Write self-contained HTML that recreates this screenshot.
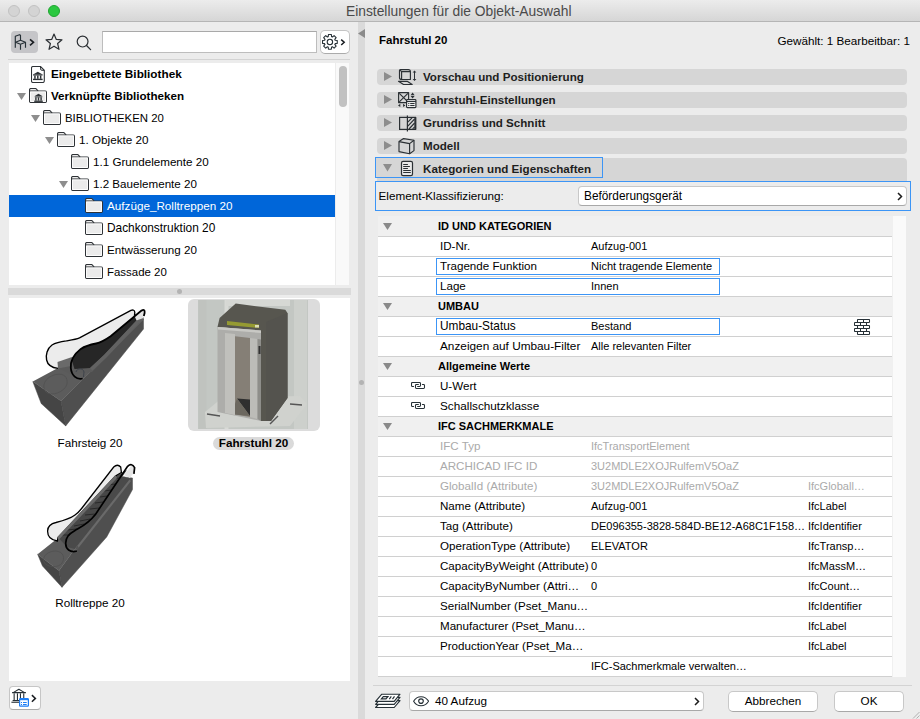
<!DOCTYPE html>
<html><head><meta charset="utf-8">
<style>
*{box-sizing:border-box;margin:0;padding:0}
html,body{width:920px;height:719px;overflow:hidden;background:#ececec;font-family:"Liberation Sans",sans-serif;color:#000}
.a{position:absolute}
.t{position:absolute;white-space:nowrap;font-size:11.7px;line-height:22px}
.s{position:absolute;white-space:nowrap;font-size:11px;line-height:20px}
#title{left:0;top:0;width:920px;height:22px;background:linear-gradient(#ececec,#d6d6d6);border-bottom:1px solid #b5b5b5}
.tl{position:absolute;top:5px;width:12px;height:12px;border-radius:50%;background:#d4d4d4;border:1px solid #c2c2c2}
</style></head><body>
<!-- title bar -->
<div id="title" class="a">
  <div class="tl" style="left:8px"></div>
  <div class="tl" style="left:28px"></div>
  <div class="tl" style="left:48px;background:#2bc840;border-color:#1fa530"></div>
  <div class="t" style="left:346px;top:1px;font-size:13.8px;line-height:22px;color:#4a4a4a">Einstellungen für die Objekt-Auswahl</div>
</div>

<!-- LEFT PANEL -->
<!-- toolbar -->
<div class="a" style="left:10.5px;top:31px;width:27px;height:22px;background:#c5c5c8;border-radius:4px"></div>
<svg class="a" style="left:14px;top:33px" width="22" height="18" viewBox="0 0 22 18">
 <g fill="none" stroke="#263036" stroke-width="1.15" stroke-linecap="butt" stroke-linejoin="round">
  <path d="M1.3,14.7 V3.3 L5.5,1.7 L6.5,2.3 V7.3"/>
  <path d="M1.5,9.3 L6.5,7.3 L11.5,9.3 L6.5,11.3Z"/>
  <path d="M6.5,11.3 V16.7 M11.5,9.3 V14.7"/>
 </g>
 <path d="M16,6.3 L19.5,9.3 L16,12.4" fill="none" stroke="#1a1e22" stroke-width="1.6" stroke-linejoin="miter"/>
</svg>
<svg class="a" style="left:45px;top:33px" width="18" height="18" viewBox="0 0 18 18">
 <path d="M9,1 L11.3,6.4 L17,6.8 L12.6,10.5 L14,16.3 L9,13.2 L4,16.3 L5.4,10.5 L1,6.8 L6.7,6.4Z" fill="none" stroke="#2b2f33" stroke-width="1.2" stroke-linejoin="round"/>
</svg>
<svg class="a" style="left:76px;top:35px" width="16" height="16" viewBox="0 0 16 16">
 <circle cx="6.6" cy="6.6" r="5.4" fill="none" stroke="#2b2f33" stroke-width="1.2"/>
 <path d="M10.5,10.5 L14.6,14.6" stroke="#2b2f33" stroke-width="1.3" stroke-linecap="round"/>
</svg>
<div class="a" style="left:102px;top:31px;width:215px;height:22px;background:#fff;border:1px solid #bdbdbd;border-top-color:#a9a9a9"></div>
<div class="a" style="left:320px;top:30px;width:30px;height:24px;background:#fff;border:1px solid #c4c4c4;border-bottom-color:#ababab;border-radius:5px"></div>
<svg class="a" style="left:322px;top:34px" width="26" height="17" viewBox="0 0 26 17">
 <g transform="translate(7.9,7.9)" fill="none" stroke="#263036" stroke-width="1.1" stroke-linejoin="round">
  <path d="M-2.10,-5.08L-1.70,-5.23L-1.43,-7.36L1.43,-7.36L1.70,-5.23L2.10,-5.08L2.50,-4.90L4.19,-6.22L6.22,-4.19L4.90,-2.50L5.08,-2.10L5.23,-1.70L7.36,-1.43L7.36,1.43L5.23,1.70L5.08,2.10L4.90,2.50L6.22,4.19L4.19,6.22L2.50,4.90L2.10,5.08L1.70,5.23L1.43,7.36L-1.43,7.36L-1.70,5.23L-2.10,5.08L-2.50,4.90L-4.19,6.22L-6.22,4.19L-4.90,2.50L-5.08,2.10L-5.23,1.70L-7.36,1.43L-7.36,-1.43L-5.23,-1.70L-5.08,-2.10L-4.90,-2.50L-6.22,-4.19L-4.19,-6.22L-2.50,-4.90Z"/>
  <circle cx="0" cy="0" r="2.7"/>
 </g>
 <path d="M19.2,5.6 L22.2,8.3 L19.2,11" fill="none" stroke="#1a1e22" stroke-width="1.5" stroke-linejoin="miter"/>
</svg>
<div class="a" style="left:8px;top:59px;width:342px;height:1px;background:#d3d3d3"></div>

<!-- tree list -->
<div class="a" style="left:9px;top:63px;width:326px;height:222px;background:#fff;overflow:hidden">
</div>
<div class="a" style="left:335px;top:63px;width:14px;height:222px;background:#f9f9f9;border-left:1px solid #ececec"></div>
<div class="a" style="left:339px;top:66px;width:8px;height:41px;background:#c1c1c1;border-radius:4px"></div>
<svg class="a" style="left:31px;top:66px" width="14" height="17" viewBox="0 0 14 17"><path d="M2,0.5 H9.5 L13.3,4.3 V15 Q13.3,16.5 11.8,16.5 H2 Q0.5,16.5 0.5,15 V2 Q0.5,0.5 2,0.5Z" fill="#fff" stroke="#2e3236" stroke-width="1.1"/><path d="M9.5,0.8 V2.8 Q9.5,4.3 11,4.3 H13" fill="none" stroke="#2e3236" stroke-width="1"/><g fill="#2e3236"><path d="M6.8,5.7 L11.6,8.5 H2Z"/><rect x="2" y="8.4" width="9.6" height="1.1"/><rect x="3.2" y="9.5" width="1.5" height="3.3"/><rect x="6.05" y="9.5" width="1.5" height="3.3"/><rect x="8.9" y="9.5" width="1.5" height="3.3"/><rect x="2" y="12.7" width="9.6" height="1.4"/></g></svg>
<div class="t" style="left:51px;top:63px;font-weight:bold;color:#000;font-size:11.78px">Eingebettete Bibliothek</div>
<svg class="a" style="left:17px;top:93px" width="9" height="7"><path d="M0,0 H9 L4.5,7Z" fill="#8e8e8e"/></svg>
<svg class="a" style="left:29px;top:88px" width="18" height="15" viewBox="0 0 18 15"><path d="M2,14.5 H16 Q17.5,14.5 17.5,13 V4.5 Q17.5,3 16,3 H9.2 L7.2,0.8 Q6.9,0.5 6.5,0.5 H2 Q0.5,0.5 0.5,2 V13 Q0.5,14.5 2,14.5Z" fill="#ebebeb" stroke="#2e3236" stroke-width="1.1"/><path d="M0.6,3 H9.2" stroke="#2e3236" stroke-width="1.1"/><rect x="1.6" y="3.9" width="14.8" height="9.6" fill="none" stroke="#fff" stroke-width="0.9"/><g fill="#2e3236"><path d="M9.5,5.8 L13.6,8.2 H5.4Z"/><rect x="5.8" y="8.5" width="7.4" height="0.9"/><rect x="6.2" y="9.4" width="1.4" height="3.2"/><rect x="8.8" y="9.4" width="1.4" height="3.2"/><rect x="11.4" y="9.4" width="1.4" height="3.2"/><rect x="5.2" y="12.6" width="8.6" height="1.3"/></g></svg>
<div class="t" style="left:51px;top:85px;font-weight:bold;color:#000;font-size:11.64px">Verknüpfte Bibliotheken</div>
<svg class="a" style="left:31px;top:115px" width="9" height="7"><path d="M0,0 H9 L4.5,7Z" fill="#8e8e8e"/></svg>
<svg class="a" style="left:43px;top:110px" width="18" height="15" viewBox="0 0 18 15"><path d="M2,14.5 H16 Q17.5,14.5 17.5,13 V4.5 Q17.5,3 16,3 H9.2 L7.2,0.8 Q6.9,0.5 6.5,0.5 H2 Q0.5,0.5 0.5,2 V13 Q0.5,14.5 2,14.5Z" fill="#ebebeb" stroke="#2e3236" stroke-width="1.1"/><path d="M0.6,3 H9.2" stroke="#2e3236" stroke-width="1.1"/><rect x="1.6" y="3.9" width="14.8" height="9.6" fill="none" stroke="#fff" stroke-width="0.9"/></svg>
<div class="t" style="left:65px;top:107px;color:#000;font-size:11.41px">BIBLIOTHEKEN 20</div>
<svg class="a" style="left:45px;top:137px" width="9" height="7"><path d="M0,0 H9 L4.5,7Z" fill="#8e8e8e"/></svg>
<svg class="a" style="left:57px;top:132px" width="18" height="15" viewBox="0 0 18 15"><path d="M2,14.5 H16 Q17.5,14.5 17.5,13 V4.5 Q17.5,3 16,3 H9.2 L7.2,0.8 Q6.9,0.5 6.5,0.5 H2 Q0.5,0.5 0.5,2 V13 Q0.5,14.5 2,14.5Z" fill="#ebebeb" stroke="#2e3236" stroke-width="1.1"/><path d="M0.6,3 H9.2" stroke="#2e3236" stroke-width="1.1"/><rect x="1.6" y="3.9" width="14.8" height="9.6" fill="none" stroke="#fff" stroke-width="0.9"/></svg>
<div class="t" style="left:79px;top:129px;color:#000;font-size:11.7px">1. Objekte 20</div>
<svg class="a" style="left:71px;top:154px" width="18" height="15" viewBox="0 0 18 15"><path d="M2,14.5 H16 Q17.5,14.5 17.5,13 V4.5 Q17.5,3 16,3 H9.2 L7.2,0.8 Q6.9,0.5 6.5,0.5 H2 Q0.5,0.5 0.5,2 V13 Q0.5,14.5 2,14.5Z" fill="#ebebeb" stroke="#2e3236" stroke-width="1.1"/><path d="M0.6,3 H9.2" stroke="#2e3236" stroke-width="1.1"/><rect x="1.6" y="3.9" width="14.8" height="9.6" fill="none" stroke="#fff" stroke-width="0.9"/></svg>
<div class="t" style="left:93px;top:151px;color:#000;font-size:11.63px">1.1 Grundelemente 20</div>
<svg class="a" style="left:59px;top:181px" width="9" height="7"><path d="M0,0 H9 L4.5,7Z" fill="#8e8e8e"/></svg>
<svg class="a" style="left:71px;top:176px" width="18" height="15" viewBox="0 0 18 15"><path d="M2,14.5 H16 Q17.5,14.5 17.5,13 V4.5 Q17.5,3 16,3 H9.2 L7.2,0.8 Q6.9,0.5 6.5,0.5 H2 Q0.5,0.5 0.5,2 V13 Q0.5,14.5 2,14.5Z" fill="#ebebeb" stroke="#2e3236" stroke-width="1.1"/><path d="M0.6,3 H9.2" stroke="#2e3236" stroke-width="1.1"/><rect x="1.6" y="3.9" width="14.8" height="9.6" fill="none" stroke="#fff" stroke-width="0.9"/></svg>
<div class="t" style="left:93px;top:173px;color:#000;font-size:11.61px">1.2 Bauelemente 20</div>
<div class="a" style="left:9px;top:195px;width:326px;height:22px;background:#0066d9"></div>
<svg class="a" style="left:85px;top:198px" width="18" height="15" viewBox="0 0 18 15"><path d="M2,14.5 H16 Q17.5,14.5 17.5,13 V4.5 Q17.5,3 16,3 H9.2 L7.2,0.8 Q6.9,0.5 6.5,0.5 H2 Q0.5,0.5 0.5,2 V13 Q0.5,14.5 2,14.5Z" fill="#ebebeb" stroke="#2e3236" stroke-width="1.1"/><path d="M0.6,3 H9.2" stroke="#2e3236" stroke-width="1.1"/><rect x="1.6" y="3.9" width="14.8" height="9.6" fill="none" stroke="#fff" stroke-width="0.9"/></svg>
<div class="t" style="left:107px;top:195px;color:#fff;font-size:11.69px">Aufzüge_Rolltreppen 20</div>
<svg class="a" style="left:85px;top:220px" width="18" height="15" viewBox="0 0 18 15"><path d="M2,14.5 H16 Q17.5,14.5 17.5,13 V4.5 Q17.5,3 16,3 H9.2 L7.2,0.8 Q6.9,0.5 6.5,0.5 H2 Q0.5,0.5 0.5,2 V13 Q0.5,14.5 2,14.5Z" fill="#ebebeb" stroke="#2e3236" stroke-width="1.1"/><path d="M0.6,3 H9.2" stroke="#2e3236" stroke-width="1.1"/><rect x="1.6" y="3.9" width="14.8" height="9.6" fill="none" stroke="#fff" stroke-width="0.9"/></svg>
<div class="t" style="left:107px;top:217px;color:#000;font-size:11.89px">Dachkonstruktion 20</div>
<svg class="a" style="left:85px;top:242px" width="18" height="15" viewBox="0 0 18 15"><path d="M2,14.5 H16 Q17.5,14.5 17.5,13 V4.5 Q17.5,3 16,3 H9.2 L7.2,0.8 Q6.9,0.5 6.5,0.5 H2 Q0.5,0.5 0.5,2 V13 Q0.5,14.5 2,14.5Z" fill="#ebebeb" stroke="#2e3236" stroke-width="1.1"/><path d="M0.6,3 H9.2" stroke="#2e3236" stroke-width="1.1"/><rect x="1.6" y="3.9" width="14.8" height="9.6" fill="none" stroke="#fff" stroke-width="0.9"/></svg>
<div class="t" style="left:107px;top:239px;color:#000;font-size:11.65px">Entwässerung 20</div>
<svg class="a" style="left:85px;top:264px" width="18" height="15" viewBox="0 0 18 15"><path d="M2,14.5 H16 Q17.5,14.5 17.5,13 V4.5 Q17.5,3 16,3 H9.2 L7.2,0.8 Q6.9,0.5 6.5,0.5 H2 Q0.5,0.5 0.5,2 V13 Q0.5,14.5 2,14.5Z" fill="#ebebeb" stroke="#2e3236" stroke-width="1.1"/><path d="M0.6,3 H9.2" stroke="#2e3236" stroke-width="1.1"/><rect x="1.6" y="3.9" width="14.8" height="9.6" fill="none" stroke="#fff" stroke-width="0.9"/></svg>
<div class="t" style="left:107px;top:261px;color:#000;font-size:11.45px">Fassade 20</div>
<!-- horizontal splitter -->
<div class="a" style="left:8px;top:288px;width:343px;height:7px;background:#dadada"></div>
<div class="a" style="left:176.5px;top:288.5px;width:5px;height:5px;border-radius:50%;background:#b3b3b3"></div>
<!-- icon view -->
<div class="a" style="left:9px;top:298px;width:341px;height:383px;background:#fff"></div>
<!-- bottom library button -->
<div class="a" style="left:9px;top:686px;width:32px;height:24px;background:#fff;border:1px solid #c6c6c6;border-bottom-color:#ababab;border-radius:4px"></div>


<!-- vertical splitter -->
<div class="a" style="left:358px;top:22px;width:7px;height:697px;background:#dadada"></div>

<!-- RIGHT PANEL -->
<svg class="a" style="left:358px;top:29px" width="7" height="9"><path d="M7,0 V9 L0,4.5Z" fill="#8b8b8b"/></svg>
<div class="a" style="left:359px;top:379.5px;width:5px;height:5px;border-radius:50%;background:#b3b3b3"></div>
<div class="t" style="left:379px;top:29px;font-weight:bold;font-size:11.5px">Fahrstuhl 20</div>
<div class="t" style="right:10px;top:30px">Gewählt: 1 Bearbeitbar: 1</div>
<div class="a" style="left:377px;top:69px;width:530px;height:16px;background:#d6d6d6;border-radius:4px"></div>
<svg class="a" style="left:384px;top:72px" width="8" height="9"><path d="M0,0 L8,4.5 L0,9Z" fill="#8d8d8d"/></svg>
<div class="t" style="left:423px;top:66px;font-weight:bold;font-size:11.6px;color:#1e1e1e">Vorschau und Positionierung</div>
<div class="a" style="left:377px;top:92px;width:530px;height:16px;background:#d6d6d6;border-radius:4px"></div>
<svg class="a" style="left:384px;top:95px" width="8" height="9"><path d="M0,0 L8,4.5 L0,9Z" fill="#8d8d8d"/></svg>
<div class="t" style="left:423px;top:89px;font-weight:bold;font-size:11.6px;color:#1e1e1e">Fahrstuhl-Einstellungen</div>
<div class="a" style="left:377px;top:115px;width:530px;height:16px;background:#d6d6d6;border-radius:4px"></div>
<svg class="a" style="left:384px;top:118px" width="8" height="9"><path d="M0,0 L8,4.5 L0,9Z" fill="#8d8d8d"/></svg>
<div class="t" style="left:423px;top:112px;font-weight:bold;font-size:11.6px;color:#1e1e1e">Grundriss und Schnitt</div>
<div class="a" style="left:377px;top:138px;width:530px;height:16px;background:#d6d6d6;border-radius:4px"></div>
<svg class="a" style="left:384px;top:141px" width="8" height="9"><path d="M0,0 L8,4.5 L0,9Z" fill="#8d8d8d"/></svg>
<div class="t" style="left:423px;top:135px;font-weight:bold;font-size:11.6px;color:#1e1e1e">Modell</div>
<div class="a" style="left:377px;top:158px;width:530px;height:23px;background:#d6d6d6;border-radius:4px 4px 0 0"></div>
<div class="a" style="left:375px;top:157px;width:228px;height:21px;border:1px solid #3c95f6;background:#d6d6d6"></div>
<svg class="a" style="left:383px;top:164px" width="9" height="8"><path d="M0,0 H9 L4.5,7.5Z" fill="#8d8d8d"/></svg>
<div class="t" style="left:423px;top:157.5px;font-weight:bold;font-size:11.65px;color:#1e1e1e">Kategorien und Eigenschaften</div>
<div class="a" style="left:375px;top:181px;width:536px;height:30px;border:1px solid #3c95f6"></div>
<div class="t" style="left:378.5px;top:185px">Element-Klassifizierung:</div>
<div class="a" style="left:578px;top:186px;width:329px;height:20px;background:#fff;border:1px solid #c8c8c8;border-bottom-color:#a8a8a8;border-radius:4px"></div>
<div class="t" style="left:584px;top:185px;font-size:11.85px">Beförderungsgerät</div>
<svg class="a" style="left:897px;top:192px" width="6" height="9"><path d="M1,1 L4.5,4.5 L1,8" fill="none" stroke="#1c1c1c" stroke-width="1.5"/></svg>
<div class="a" style="left:378px;top:216px;width:514px;height:461px;background:#fff"></div>
<div class="a" style="left:892px;top:216px;width:14px;height:461px;background:#fafafa;border-left:1px solid #f0f0f0"></div>
<div class="a" style="left:378px;top:216px;width:514px;height:20px;background:#f0f0f0"></div>
<svg class="a" style="left:383px;top:223px" width="9" height="7"><path d="M0,0 H9 L4.5,7Z" fill="#8a8a8a"/></svg>
<div class="s" style="left:438px;top:216px;font-weight:bold">ID UND KATEGORIEN</div>
<div class="s" style="left:440px;top:236px;font-size:11.6px;">ID-Nr.</div>
<div class="s" style="left:591px;top:236px;">Aufzug-001</div>
<div class="a" style="left:436px;top:258px;width:284px;height:17px;border:1px solid #3c95f6"></div>
<div class="s" style="left:440px;top:256px;font-size:11.6px;">Tragende Funktion</div>
<div class="s" style="left:591px;top:256px;">Nicht tragende Elemente</div>
<div class="a" style="left:436px;top:278px;width:284px;height:17px;border:1px solid #3c95f6"></div>
<div class="s" style="left:440px;top:276px;font-size:11.6px;">Lage</div>
<div class="s" style="left:591px;top:276px;">Innen</div>
<div class="a" style="left:378px;top:296px;width:514px;height:20px;background:#f0f0f0"></div>
<svg class="a" style="left:383px;top:303px" width="9" height="7"><path d="M0,0 H9 L4.5,7Z" fill="#8a8a8a"/></svg>
<div class="s" style="left:438px;top:296px;font-weight:bold">UMBAU</div>
<div class="a" style="left:436px;top:318px;width:284px;height:17px;border:1px solid #3c95f6"></div>
<div class="s" style="left:440px;top:316px;font-size:11.85px;">Umbau-Status</div>
<div class="s" style="left:591px;top:316px;">Bestand</div>
<svg class="a" style="left:854px;top:319px" width="17" height="17" viewBox="0 0 17 17"><g fill="#fff" stroke="#263036" stroke-width="1.05"><rect x="3.5" y="0.5" width="12.0" height="3" rx="0.5"/><path d="M9.5,0.5 V3.5"/><rect x="0.5" y="3.5" width="12.0" height="3" rx="0.5"/><path d="M6.5,3.5 V6.5"/><rect x="3.5" y="6.5" width="12.0" height="3" rx="0.5"/><path d="M9.5,6.5 V9.5"/><rect x="0.5" y="9.5" width="12.0" height="3" rx="0.5"/><path d="M6.5,9.5 V12.5"/><rect x="3.5" y="12.5" width="12.0" height="3" rx="0.5"/><path d="M9.5,12.5 V15.5"/></g></svg>
<div class="s" style="left:440px;top:336px;font-size:11.8px;">Anzeigen auf Umbau-Filter</div>
<div class="s" style="left:591px;top:336px;">Alle relevanten Filter</div>
<div class="a" style="left:378px;top:356px;width:514px;height:20px;background:#f0f0f0"></div>
<svg class="a" style="left:383px;top:363px" width="9" height="7"><path d="M0,0 H9 L4.5,7Z" fill="#8a8a8a"/></svg>
<div class="s" style="left:438px;top:356px;font-weight:bold">Allgemeine Werte</div>
<svg class="a" style="left:411px;top:382px" width="15" height="8" viewBox="0 0 15 8"><g fill="none" stroke="#263036" stroke-width="1.05" stroke-linecap="round"><path d="M2.6,4.5 H1.4 Q0.5,4.5 0.5,3.6 V1.4 Q0.5,0.5 1.4,0.5 H8.6 Q9.5,0.5 9.5,1.4 V3.6 Q9.5,4.5 8.6,4.5 H6.6"/><path d="M11.4,2.5 H12.6 Q13.5,2.5 13.5,3.4 V5.6 Q13.5,6.5 12.6,6.5 H5.4 Q4.5,6.5 4.5,5.6 V3.4 Q4.5,2.5 5.4,2.5 H7.4"/></g></svg>
<div class="s" style="left:440px;top:376px;font-size:11.6px;">U-Wert</div>
<svg class="a" style="left:411px;top:402px" width="15" height="8" viewBox="0 0 15 8"><g fill="none" stroke="#263036" stroke-width="1.05" stroke-linecap="round"><path d="M2.6,4.5 H1.4 Q0.5,4.5 0.5,3.6 V1.4 Q0.5,0.5 1.4,0.5 H8.6 Q9.5,0.5 9.5,1.4 V3.6 Q9.5,4.5 8.6,4.5 H6.6"/><path d="M11.4,2.5 H12.6 Q13.5,2.5 13.5,3.4 V5.6 Q13.5,6.5 12.6,6.5 H5.4 Q4.5,6.5 4.5,5.6 V3.4 Q4.5,2.5 5.4,2.5 H7.4"/></g></svg>
<div class="s" style="left:440px;top:396px;font-size:11.75px;">Schallschutzklasse</div>
<div class="a" style="left:378px;top:416px;width:514px;height:20px;background:#f0f0f0"></div>
<svg class="a" style="left:383px;top:423px" width="9" height="7"><path d="M0,0 H9 L4.5,7Z" fill="#8a8a8a"/></svg>
<div class="s" style="left:438px;top:416px;font-weight:bold">IFC SACHMERKMALE</div>
<div class="s" style="left:440px;top:436px;font-size:11.6px;color:#aaaaaa;">IFC Typ</div>
<div class="s" style="left:591px;top:436px;color:#aaaaaa;">IfcTransportElement</div>
<div class="s" style="left:440px;top:456px;font-size:11.6px;color:#aaaaaa;">ARCHICAD IFC ID</div>
<div class="s" style="left:591px;top:456px;color:#aaaaaa;">3U2MDLE2XOJRulfemV5OaZ</div>
<div class="s" style="left:440px;top:476px;font-size:11.6px;color:#aaaaaa;">GlobalId (Attribute)</div>
<div class="s" style="left:591px;top:476px;color:#aaaaaa;">3U2MDLE2XOJRulfemV5OaZ</div>
<div class="s" style="left:808px;top:476px;color:#aaaaaa;">IfcGloball…</div>
<div class="s" style="left:440px;top:496px;font-size:11.6px;">Name (Attribute)</div>
<div class="s" style="left:591px;top:496px;">Aufzug-001</div>
<div class="s" style="left:808px;top:496px;">IfcLabel</div>
<div class="s" style="left:440px;top:516px;font-size:11.6px;">Tag (Attribute)</div>
<div class="s" style="left:591px;top:516px;">DE096355-3828-584D-BE12-A68C1F158…</div>
<div class="s" style="left:808px;top:516px;">IfcIdentifier</div>
<div class="s" style="left:440px;top:536px;font-size:11.6px;">OperationType (Attribute)</div>
<div class="s" style="left:591px;top:536px;">ELEVATOR</div>
<div class="s" style="left:808px;top:536px;">IfcTransp…</div>
<div class="s" style="left:440px;top:556px;font-size:11.6px;">CapacityByWeight (Attribute)</div>
<div class="s" style="left:591px;top:556px;">0</div>
<div class="s" style="left:808px;top:556px;">IfcMassM…</div>
<div class="s" style="left:440px;top:576px;font-size:11.6px;">CapacityByNumber (Attri…</div>
<div class="s" style="left:591px;top:576px;">0</div>
<div class="s" style="left:808px;top:576px;">IfcCount…</div>
<div class="s" style="left:440px;top:596px;font-size:11.6px;">SerialNumber (Pset_Manu…</div>
<div class="s" style="left:808px;top:596px;">IfcIdentifier</div>
<div class="s" style="left:440px;top:616px;font-size:11.6px;">Manufacturer (Pset_Manu…</div>
<div class="s" style="left:808px;top:616px;">IfcLabel</div>
<div class="s" style="left:440px;top:636px;font-size:11.6px;">ProductionYear (Pset_Ma…</div>
<div class="s" style="left:808px;top:636px;">IfcLabel</div>
<div class="s" style="left:591px;top:656px;">IFC-Sachmerkmale verwalten…</div>
<div class="a" style="left:378px;top:236px;width:514px;height:1px;background:#d0d0d0"></div>
<div class="a" style="left:378px;top:256px;width:514px;height:1px;background:#d0d0d0"></div>
<div class="a" style="left:378px;top:276px;width:514px;height:1px;background:#d0d0d0"></div>
<div class="a" style="left:378px;top:296px;width:514px;height:1px;background:#d0d0d0"></div>
<div class="a" style="left:378px;top:316px;width:514px;height:1px;background:#d0d0d0"></div>
<div class="a" style="left:378px;top:336px;width:514px;height:1px;background:#d0d0d0"></div>
<div class="a" style="left:378px;top:356px;width:514px;height:1px;background:#d0d0d0"></div>
<div class="a" style="left:378px;top:376px;width:514px;height:1px;background:#d0d0d0"></div>
<div class="a" style="left:378px;top:396px;width:514px;height:1px;background:#d0d0d0"></div>
<div class="a" style="left:378px;top:416px;width:514px;height:1px;background:#d0d0d0"></div>
<div class="a" style="left:378px;top:436px;width:514px;height:1px;background:#d0d0d0"></div>
<div class="a" style="left:378px;top:456px;width:514px;height:1px;background:#d0d0d0"></div>
<div class="a" style="left:378px;top:476px;width:514px;height:1px;background:#d0d0d0"></div>
<div class="a" style="left:378px;top:496px;width:514px;height:1px;background:#d0d0d0"></div>
<div class="a" style="left:378px;top:516px;width:514px;height:1px;background:#d0d0d0"></div>
<div class="a" style="left:378px;top:536px;width:514px;height:1px;background:#d0d0d0"></div>
<div class="a" style="left:378px;top:556px;width:514px;height:1px;background:#d0d0d0"></div>
<div class="a" style="left:378px;top:576px;width:514px;height:1px;background:#d0d0d0"></div>
<div class="a" style="left:378px;top:596px;width:514px;height:1px;background:#d0d0d0"></div>
<div class="a" style="left:378px;top:616px;width:514px;height:1px;background:#d0d0d0"></div>
<div class="a" style="left:378px;top:636px;width:514px;height:1px;background:#d0d0d0"></div>
<div class="a" style="left:378px;top:656px;width:514px;height:1px;background:#d0d0d0"></div>
<div class="a" style="left:378px;top:676px;width:514px;height:1px;background:#d0d0d0"></div>
<div class="a" style="left:373px;top:685px;width:539px;height:1px;background:#d3d3d3"></div>
<div class="a" style="left:409px;top:691px;width:295px;height:20px;background:#fff;border:1px solid #c8c8c8;border-bottom-color:#a8a8a8;border-radius:4px"></div>
<div class="t" style="left:435px;top:690px">40 Aufzug</div>
<svg class="a" style="left:694px;top:697px" width="6" height="9"><path d="M1,1 L4.5,4.5 L1,8" fill="none" stroke="#1c1c1c" stroke-width="1.5"/></svg>
<svg class="a" style="left:413px;top:696px" width="16" height="11" viewBox="0 0 16 11"><path d="M0.6,5.2 C4,-0.8 12,-0.8 15.6,5.2 C12,11.2 4,11.2 0.6,5.2Z" fill="none" stroke="#263036" stroke-width="1.05"/><circle cx="8" cy="5.1" r="2.3" fill="none" stroke="#263036" stroke-width="1.2"/></svg>
<div class="a" style="left:728px;top:691px;width:90px;height:21px;background:#fff;border:1px solid #c8c8c8;border-bottom-color:#a8a8a8;border-radius:5px"></div>
<div class="t" style="left:728px;width:90px;text-align:center;top:690px">Abbrechen</div>
<div class="a" style="left:834px;top:691px;width:70px;height:21px;background:#fff;border:1px solid #c8c8c8;border-bottom-color:#a8a8a8;border-radius:5px"></div>
<div class="t" style="left:834px;width:70px;text-align:center;top:690px">OK</div>
<svg class="a" style="left:910px;top:709px" width="10" height="10"><path d="M9.5,3 L3,9.5 M9.5,6.5 L6.5,9.5" stroke="#b0b0b0" stroke-width="1"/></svg>
<svg class="a" style="left:375px;top:693px" width="27" height="16" viewBox="0 0 27 16"><g fill="#fff" stroke="#263036" stroke-width="1.15" stroke-linejoin="round"><path d="M6.8,7.6 H25 L19.2,14.5 H0.6Z"/><path d="M6.8,4.4 H25 L19.2,11.3 H0.6Z"/><path d="M6.8,1.2 H25 L19.2,8.4 H0.6Z"/></g><g fill="none" stroke="#263036" stroke-width="1.2"><path d="M8.3,3.7 H12.9 L11,5.9 H6.4Z"/><path d="M16.3,3.3 L14.3,6.2 M19.5,3.3 L17.5,6.2"/></g></svg>
<svg class="a" style="left:397px;top:69px" width="21" height="17" viewBox="0 0 21 17"><g fill="none" stroke="#2b3034" stroke-width="1.15" stroke-linejoin="round">
<path d="M3.5,0.6 H11.3 Q13.4,0.6 13.4,2.6 V10.5 H4.6 Q2.5,10.5 2.5,8.5 V1.6 Q2.5,0.6 3.5,0.6Z"/><path d="M2.8,0.9 L4.6,2.6 H13.2 M4.6,2.6 V10.3"/>
<path d="M1.5,12.3 H10.2 L15.2,15.5 H6.5Z"/></g>
<path d="M17.5,3 V10.5" stroke="#2b3034" stroke-width="1"/><path d="M15.6,3.6 L17.5,1.4 L19.4,3.6Z M15.6,9.9 L17.5,12.1 L19.4,9.9Z" fill="#2b3034"/></svg>
<svg class="a" style="left:397px;top:92px" width="21" height="17" viewBox="0 0 21 17"><g fill="none" stroke="#2b3034" stroke-width="1.15" stroke-linejoin="round">
<rect x="1.6" y="0.6" width="10" height="10"/><path d="M2.3,1.3 L10.9,9.9 M10.9,1.3 L2.3,9.9"/>
</g><rect x="9.6" y="7.6" width="9.3" height="8" rx="0.8" fill="#fff" stroke="#2b3034" stroke-width="1.2"/><rect x="9.6" y="9" width="9.3" height="1.1" fill="#2b3034"/>
<g fill="#2b3034"><rect x="11.2" y="11" width="1.2" height="1.1"/><rect x="11.2" y="13" width="1.2" height="1.1"/><rect x="13.2" y="11" width="4.4" height="1.1"/><rect x="13.2" y="13" width="4.4" height="1.1"/>
<path d="M13.6,3.2 L15.6,0.6 L17.6,3.2Z M13.6,4 L15.6,6.6 L17.6,4Z M1,13.4 L3.3,11.7 L3.3,15.1Z M6.1,11.7 L8.4,13.4 L6.1,15.1Z"/></g></svg>
<svg class="a" style="left:397px;top:115px" width="21" height="17" viewBox="0 0 21 17">
<rect x="2.6" y="2.4" width="15.8" height="12" fill="none" stroke="#2b3034" stroke-width="1.2"/>
<path d="M10.4,0.5 V16.5" stroke="#2b3034" stroke-width="1.2"/><path d="M18.4,2.2 V14.6" stroke="#2b3034" stroke-width="2"/>
<g stroke="#2b3034" stroke-width="1.1"><path d="M10.8,7.2 L15,2.8 M10.8,11.2 L17.6,4 M12,14 L17.6,8 M15.6,14 L17.6,11.8"/></g></svg>
<svg class="a" style="left:397px;top:138px" width="21" height="17" viewBox="0 0 21 17"><g fill="none" stroke="#2b3034" stroke-width="1.15" stroke-linejoin="round" stroke-width="1.2">
<path d="M2,3.6 L6.6,0.6 L17,2.2 V12.6 L12.6,15.8 L2,13.6Z"/><path d="M2,3.6 L12.6,5.6 L17,2.2 M12.6,5.6 V15.8"/></g></svg>
<svg class="a" style="left:400px;top:160px" width="14" height="17" viewBox="0 0 14 17"><rect x="1.5" y="1.4" width="11" height="14.2" rx="1.6" fill="#e9e9e9" stroke="#2b3034" stroke-width="1.2"/>
<g fill="#2b3034"><rect x="3.2" y="4" width="4.7" height="1"/><rect x="3.2" y="6" width="6.7" height="1"/><rect x="3.2" y="8" width="4.7" height="1"/><rect x="3.2" y="10" width="7.6" height="1"/><rect x="3.2" y="12" width="7.6" height="1"/></g></svg>
<svg class="a" style="left:10px;top:688px" width="28" height="20" viewBox="0 0 28 20">
<path d="M3.6,4.4 L8.9,1.3 L14.2,4.4" fill="#fff" stroke="#263036" stroke-width="1.1" stroke-linejoin="round"/>
<g fill="#263036"><rect x="2" y="4" width="14" height="1.3" rx="0.5"/>
<rect x="3.6" y="5.3" width="1.1" height="7"/><rect x="6.9" y="5.3" width="1.1" height="7"/><rect x="9.9" y="5.3" width="1.1" height="7"/><rect x="13.2" y="5.3" width="1.1" height="7"/>
<rect x="2.6" y="12" width="12" height="1.1"/><rect x="1.4" y="13.7" width="14" height="1.1"/></g>
<rect x="9.6" y="10.6" width="8.8" height="7.6" rx="0.8" fill="#fff" stroke="#1b7df6" stroke-width="1.2"/><rect x="9.6" y="11" width="8.8" height="1.2" fill="#1b7df6"/>
<g fill="#1b7df6"><rect x="11" y="14" width="1" height="1"/><rect x="11" y="16" width="1" height="1"/><rect x="13" y="14" width="3.7" height="1"/><rect x="13" y="16" width="3.7" height="1"/></g>
<path d="M21.9,7.1 L25.4,10.4 L21.9,13.7" fill="none" stroke="#1a1e22" stroke-width="1.5"/>
</svg>
<svg class="a" style="left:25px;top:300px" width="130" height="130" viewBox="25 300 130 130">
<path d="M61,400.9 L143.5,319 L143.5,329 L65.7,425.9Z" fill="#4f4f4f" stroke="#4f4f4f" stroke-width="0.5"/>
<path d="M32.8,381.6 L61,400.9 L65.7,425.9 L41.2,403.5Z" fill="#454545" stroke="#454545" stroke-width="0.5"/>
<path d="M32.8,381.6 L57.9,368 L136,316 L143.5,317 L143.5,319.5 L61,400.9Z" fill="#5c5c5c"/>
<path d="M46,392 C41,386 45,377 56,374.5 C64,373 68,377 67,384 C65,392 51,397 46,392Z" fill="none" stroke="#505050" stroke-width="0.8"/>
<path d="M57.9,368 L58,360 L134,314 L143,316 L143,320 L92,372 L70,374Z" fill="#5a5a5a"/>
<path d="M72,361 C74,355 77,351.5 80.8,348.9 C86,345.5 91,344.5 96.1,343.5 C101,342.5 106,339.5 110.6,336.3 L142.9,309.8 L143,317 L136,321 L104,355 L90,368 L74.5,369Z" fill="#262626"/>
<path d="M90,368 L104,355 L136,321 L143,317 L143.5,319.8 L138.5,323.5 L106.5,357.5 L92.5,370.5Z" fill="#626262"/>
<path d="M58,368.4 C51,367.5 47.5,364.5 46.6,360 C45.6,355 47,348.5 52,345 C56,342.5 61,341.6 66.3,340.9 C72,340 76,339.5 79.5,337.9 L130.9,310.4 Q134.5,309 134.8,312.5 L134.5,315.8 L110.6,336.3 C106,339.5 101,342.5 96.1,343.5 C91,344.5 86,345.5 80.8,348.9 C76,352 73,356 72,360 L58,364Z" fill="#ececec"/>
<path d="M134.5,315.8 L142,310 L144,311 L143.5,318 L136.5,320.5Z" fill="#e4e4e4"/>
<path d="M58,368.4 C51,367.5 47.5,364.5 46.6,360 C45.6,355 47,348.5 52,345 C56,342.5 61,341.6 66.3,340.9 C72,340 76,339.5 79.5,337.9 L130.9,310.4 Q134.5,309 134.8,312.5 L134.5,315.8" fill="none" stroke="#000" stroke-width="1.35"/>
<path d="M57.5,362 L72,357 L71,366 L58,368.5Z" fill="#6a6a6a"/>
<path d="M82.6,378.5 C76.5,380 71.5,375.5 70.8,368 C70.2,361 73,355 80.8,348.9 C86,345.5 91,344.5 96.1,343.5 C101,342.5 106,339.5 110.6,336.3 L141.5,310.6 Q145.2,308.6 144.6,313 L143.8,316" fill="none" stroke="#000" stroke-width="1.8"/>
<path d="M76,372 C77,368 83,367.5 84,372 L83.5,377" fill="none" stroke="#3a4048" stroke-width="0.9"/>
</svg>
<div class="a" style="left:187.5px;top:299px;width:132px;height:132px;background:#dcdcdc;border-radius:6px"></div>
<svg class="a" style="left:198px;top:300px" width="110" height="129" viewBox="198 300 110 129">
<rect x="198" y="300" width="110" height="130" fill="#c3c7c3"/>
<rect x="198.5" y="300" width="8" height="130" fill="#c0c3bf"/>
<rect x="224.5" y="300" width="4" height="130" fill="#d8dad6"/>
<rect x="294" y="300" width="13" height="130" fill="#cdd0cc"/>
<path d="M205,412 L222,398 L300,396 L307,404 L290,426 L206,428Z" fill="#d0d2ce"/>
<path d="M207,414 L220,416 M290,404 L302,405" stroke="#555" stroke-width="1.5"/>
<path d="M270,424 L278,416" stroke="#555" stroke-width="1.5"/>
<path d="M226,300 L290,300 L290,306 L226,306Z" fill="#d6d8d4"/><path d="M219.6,318 L235.7,303.6 L285.3,309.8 L287.5,313 L287.5,398 L271,421 L261,421 L261,331 L217.5,327Z" fill="#57564f"/>
<path d="M287.5,313 L287.5,398 L271,421 L266,421 L266,322Z" fill="#54534e"/>
<path d="M227,321 L259,324.5 L259,328 L227,325Z" fill="#959a32"/>
<rect x="255" y="325" width="4" height="2.5" fill="#dcdcb8"/>
<path d="M217.5,327 L261,330.5 L261,421 L217.5,412Z" fill="#adadaa"/>
<path d="M218,327 L261,330.5 L261,333 L218,329.5Z" fill="#c8c8c4"/>
<path d="M225,333 L235,334 L235,415 L225,413Z" fill="#c0c0bc"/>
<path d="M235,336.2 L250,338 L250,417 L235,414.5Z" fill="#857f76"/>
<path d="M237,398.5 L250,399.5 L250,416 Z" fill="#2f2f2f"/>
<path d="M235,404 L237,398.5 L250,416 L235,414.5Z" fill="#6c6860"/>
<path d="M250,338 L257.5,339 L257.5,419 L250,417Z" fill="#bcbcb8"/><path d="M257.5,339 L261,339.5 L261,421 L257.5,419Z" fill="#8e8e8a"/>
<rect x="258.5" y="346" width="2" height="8" fill="#333"/>
</svg>
<div class="a" style="left:213px;top:436.5px;width:80.5px;height:13px;background:#dadada;border-radius:7px"></div>
<div class="t" style="left:187.5px;width:132px;text-align:center;top:432px;font-weight:bold">Fahrstuhl 20</div>
<div class="t" style="left:25px;width:130px;text-align:center;top:432px">Fahrsteig 20</div>
<svg class="a" style="left:25px;top:455px" width="130" height="140" viewBox="25 455 130 140">
<path d="M59,570.8 L62,587.3 L106.7,537 L132.5,489.5 L132.5,478 L124,477 L74.8,549Z" fill="#4f4f4f" stroke="#4f4f4f" stroke-width="0.5"/>
<path d="M37.6,554.2 L59,570.8 L62,587.3 L42.5,566Z" fill="#454545" stroke="#454545" stroke-width="0.5"/>
<path d="M37.6,554.2 L57.4,538.5 L116,476.5 L124,477 L74.8,549 L59,570.8Z" fill="#5c5c5c"/>
<path d="M44,562 C42,556 48,551 56,551 C64,552 65,558 62,563 C59,568 47,568 44,562Z" fill="none" stroke="#505050" stroke-width="0.8"/>
<path d="M58.5,538 L116,476 L124,476.5 L129.5,479.5 L74.8,549 L67,547Z" fill="#4a4a4a"/>
<path d="M58.5,538 L116,476 L127,470 L95.6,514.2 C88,524 80,527.5 75,530.5 C69,534 66,537 65.7,543Z" fill="#474747"/>
<g stroke="#262626" stroke-width="0.9"><path d="M62,535 L70,535 M67,530 L77,529 M74,526 L84,524 M80,521 L90,519 M85,515 L95,514 M90,509 L99,508 M95,503 L103,502 M100,497 L107,496 M104,491 L111,490 M108,485 L115,484 M112,479 L119,478"/></g>
<path d="M74.8,549 L129.5,479.5 L131,481 L76,551Z" fill="#6a6a6a"/>
<path d="M57.4,541 C50,540 47.5,536 47.6,531 C47.8,526 51,523.5 56,522.5 C64,520.5 71,518 75,515 C78,513 80,510.5 82,508 L113.7,467 Q117.5,463.5 120.7,467 L121.4,472.5 L115.5,476 L58,537.5Z" fill="#ececec" stroke="#000" stroke-width="1.3"/>
<path d="M57.4,537 L115.5,475 L117,478 L58.5,540Z" fill="#6a6a6a"/>
<path d="M124,475 L131.5,465.5 Q134.6,466 134.2,472 L130,478Z" fill="#e6e6e6"/>
<path d="M76.9,551 C70,553 65.5,549 65.7,543 C66,537 69,534 75,530.5 C80,527.5 88,524 95.6,514.2 L127.6,466.3 Q131.8,462.5 134.6,467.6 L133.9,473.9" fill="none" stroke="#000" stroke-width="1.7"/>
<path d="M75.5,550 L77,545 L79,548Z" fill="#555"/>
</svg>
<div class="t" style="left:25px;width:130px;text-align:center;top:592px">Rolltreppe 20</div>


</body></html>
